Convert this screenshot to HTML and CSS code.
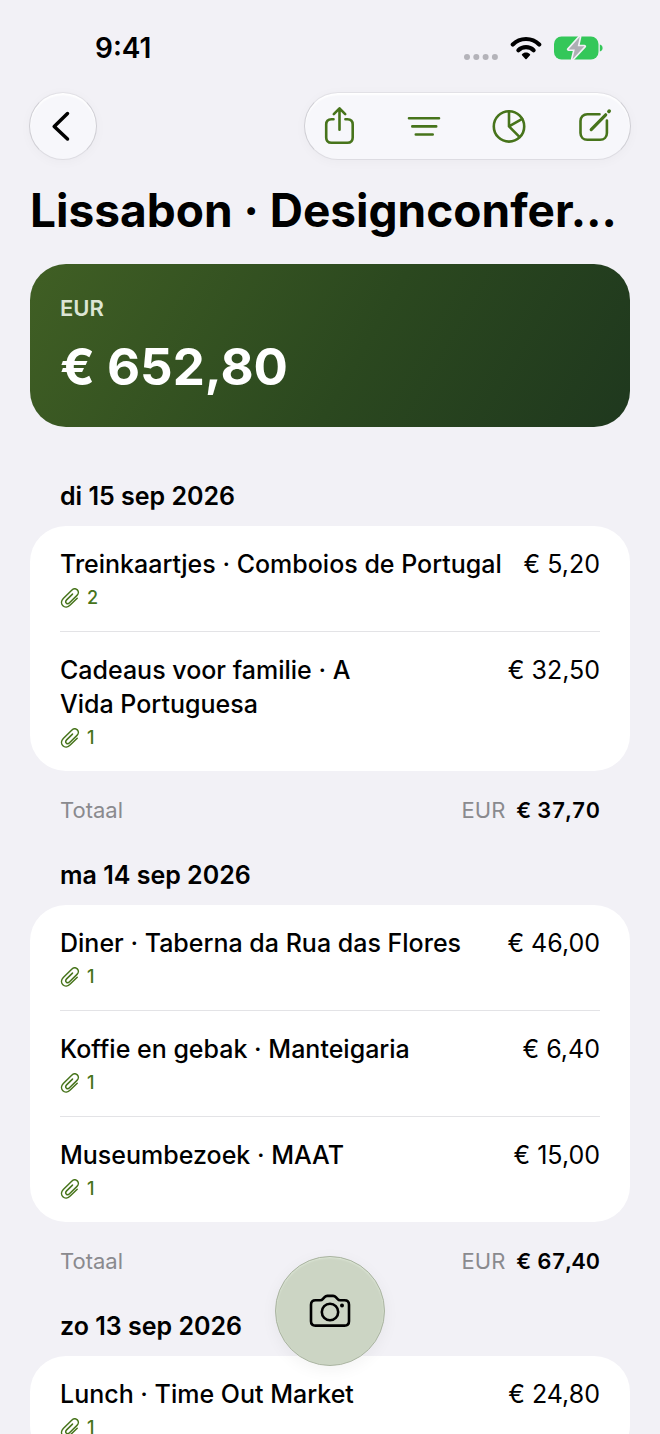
FILE: index.html
```html
<!DOCTYPE html>
<html lang="nl">
<head>
  <meta charset="UTF-8">
  <meta name="viewport" content="width=device-width, initial-scale=1">
  <title>Lissabon</title>
  <link rel="stylesheet" href="styles.css">
</head>
<body>

  <svg class="symbols" aria-hidden="true">
    <symbol id="paperclip" viewBox="0 0 20 20">
      <path d="M17.200 10.200 10.200 17C8 19.200 4.900 19.700 2.900 17.700 .9 15.700 1.200 12.700 3.300 10.500L11.700 2.300C13.400 .6 15.800 .5 17.300 1.900 18.800 3.400 18.700 5.700 17 7.400L9.500 14.800C8.500 15.800 7.200 15.900 6.300 15.100 5.500 14.200 5.600 12.900 6.600 11.900L12.500 6.100"/>
    </symbol>
  </svg>

  <div class="status-bar">
    <span class="time">9:41</span>
    <div class="status-icons">
      <svg width="34" height="24" viewBox="0 0 34 24" fill="#b4b3b9">
        <circle cx="3" cy="21" r="3"/>
        <circle cx="12.300" cy="21" r="3"/>
        <circle cx="21.600" cy="21" r="3"/>
        <circle cx="30.900" cy="21" r="3"/>
      </svg>
      <svg width="32" height="24" viewBox="0 0 32 24" fill="none" stroke="#000" stroke-width="4.200">
        <path d="M2.800 8.400C10 1.200 22 1.200 29.200 8.400" stroke-linecap="round"/>
        <path d="M8.400 14.200C12.600 10.100 19.400 10.100 23.600 14.200" stroke-linecap="round"/>
        <path d="M16 16.600c-1.600 0-3 .6-4 1.600-.3.300-.3.700 0 1L15.400 23c.4.400.8.400 1.200 0L20 19.200c.3-.3.3-.7 0-1-1-1-2.400-1.600-4-1.600z" fill="#000" stroke="none"/>
      </svg>
      <svg width="50" height="24" viewBox="0 0 50 24">
        <rect x="0" y="0.500" width="44.500" height="23" rx="7.500" fill="#34c759"/>
        <path d="M45.800 8.600c1.800.5 2.800 1.700 2.800 3.400s-1 2.900-2.800 3.400z" fill="#34c759"/>
        <path d="M25.800.8 14.500 13.400h6.300L18.500 23.200 30.500 10.300h-6.800z" fill="#aeaeb4" stroke="#f2f1f6" stroke-width="3.200" stroke-linejoin="round" paint-order="stroke"/>
      </svg>
    </div>
  </div>

  <header class="toolbar">
    <button class="glass back" aria-label="Terug">
      <svg width="24" height="32" viewBox="0 0 24 32" fill="none" stroke="#000" stroke-width="3.500" stroke-linecap="round" stroke-linejoin="round">
        <path d="M16.500 3.500 3.200 16.500 16.500 29"/>
      </svg>
    </button>
    <div class="glass actions">
      <button aria-label="Deel">
        <svg width="32" height="40" viewBox="0 0 32 40">
          <path d="M10.500 13.200H8.500C5.200 13.200 3.200 15.200 3.200 18.500v12.900c0 3.300 2 5.300 5.300 5.300h15.900c3.300 0 5.300-2 5.300-5.300V18.500c0-3.300-2-5.300-5.300-5.300h-2"/>
          <path d="M16.500 23.800V2.600M10.800 8.100l5.700-5.800 5.700 5.800"/>
        </svg>
      </button>
      <button aria-label="Sorteer">
        <svg width="34" height="40" viewBox="0 0 34 40">
          <path d="M2 12.200h30M5.300 20.400h23.900M8.800 28.500h16.900"/>
        </svg>
      </button>
      <button aria-label="Statistiek">
        <svg width="34" height="40" viewBox="0 0 34 40">
          <circle cx="17" cy="20.400" r="15.200"/>
          <path d="M17 5.200v15.200l10.700 10.800M17 20.400l13.200-7.600"/>
        </svg>
      </button>
      <button aria-label="Bewerk">
        <svg width="34" height="40" viewBox="0 0 34 40">
          <path d="M21.500 8.200H9.300C5.300 8.200 2.500 11 2.500 15v11.900c0 4 2.800 6.800 6.800 6.800h12.800c4 0 6.800-2.800 6.800-6.800V14.500"/>
          <path d="M13.200 23.600 27.700 8.800" stroke-width="3.200"/>
          <path d="M30.900 5.400l.3-.3" stroke-width="3.600"/>
        </svg>
      </button>
    </div>
  </header>

  <main>
    <h1>Lissabon · Designconfer…</h1>

    <section class="summary">
      <h2>EUR</h2>
      <p>€ 652,80</p>
    </section>

    <section class="day">
      <h2>di 15 sep 2026</h2>
      <ul>
        <li>
          <h3>Treinkaartjes · Comboios de Portugal</h3>
          <span class="price">€ 5,20</span>
          <span class="files"><svg><use href="#paperclip"/></svg>2</span>
        </li>
        <li>
          <h3>Cadeaus voor familie&nbsp;·&nbsp;A Vida Portuguesa</h3>
          <span class="price">€ 32,50</span>
          <span class="files"><svg><use href="#paperclip"/></svg>1</span>
        </li>
      </ul>
      <p class="total">Totaal <span>EUR</span> <strong>€ 37,70</strong></p>
    </section>

    <section class="day">
      <h2>ma 14 sep 2026</h2>
      <ul>
        <li>
          <h3>Diner · Taberna da Rua das Flores</h3>
          <span class="price">€ 46,00</span>
          <span class="files"><svg><use href="#paperclip"/></svg>1</span>
        </li>
        <li>
          <h3>Koffie en gebak · Manteigaria</h3>
          <span class="price">€ 6,40</span>
          <span class="files"><svg><use href="#paperclip"/></svg>1</span>
        </li>
        <li>
          <h3>Museumbezoek · MAAT</h3>
          <span class="price">€ 15,00</span>
          <span class="files"><svg><use href="#paperclip"/></svg>1</span>
        </li>
      </ul>
      <p class="total">Totaal <span>EUR</span> <strong>€ 67,40</strong></p>
    </section>

    <section class="day">
      <h2>zo 13 sep 2026</h2>
      <ul>
        <li>
          <h3>Lunch · Time Out Market</h3>
          <span class="price">€ 24,80</span>
          <span class="files"><svg><use href="#paperclip"/></svg>1</span>
        </li>
      </ul>
    </section>
  </main>

  <button class="camera" aria-label="Maak foto">
    <svg width="42" height="34" viewBox="0 0 42 34" fill="none" stroke="#000" stroke-width="2.600" stroke-linejoin="round">
      <path d="M6.500 6.300h4.800c1 0 1.700-.3 2.400-1.100l1.900-2.100c.8-.9 1.500-1.200 2.700-1.200h5.800c1.200 0 1.900.3 2.700 1.200l1.900 2.100c.7.800 1.400 1.100 2.400 1.100h4.400c2.900 0 4.500 1.500 4.500 4.400v16.500c0 2.900-1.600 4.400-4.500 4.400h-29c-2.900 0-4.500-1.500-4.500-4.400V10.700c0-2.900 1.600-4.400 4.500-4.400z"/>
      <circle cx="21" cy="18" r="8.200"/>
      <circle cx="33" cy="11.600" r="2" fill="#000" stroke="none"/>
    </svg>
  </button>

</body>
</html>
```
FILE: styles.css
```css
* {
  box-sizing: border-box;
}
body {
  height: 100vh;
  margin: 0;
  padding: 0 30px;
  overflow: hidden;
  background: #f2f1f6;
  color: #000;
  font-family: Inter, "Liberation Sans", sans-serif;
  font-size: 25px;
  line-height: 34px;
}
h1, h2, h3, p, ul {
  margin: 0;
  padding: 0;
}
button {
  padding: 0;
  border: none;
  background: none;
  cursor: pointer;
}
svg {
  display: block;
}
.symbols {
  display: none;
}

/* status bar */
.status-bar {
  display: flex;
  justify-content: space-between;
  align-items: center;
  height: 92px;
  padding: 4px 26px 0 65px;
}
.time {
  font-size: 28px;
  font-weight: 600;
}
.status-icons {
  display: flex;
  gap: 12px;
}

/* toolbar */
.toolbar {
  display: flex;
  justify-content: space-between;
  margin: 0 -1px;
}
.glass {
  display: flex;
  align-items: center;
  height: 68px;
  border: 1px solid #cfced4;
  border-top-color: #e2e1e6;
  border-bottom-color: #dddce2;
  border-radius: 34px;
  background: #f7f7fb;
  box-shadow: 0 2px 12px rgba(0, 0, 0, 0.03), inset 0 2px 2px #fff;
}
.back {
  justify-content: center;
  width: 68px;
}
.actions {
  justify-content: space-between;
  width: 327px;
  padding: 0 18px;
}
.actions svg {
  fill: none;
  stroke: #47741b;
  stroke-width: 2.6px;
  stroke-linecap: round;
  stroke-linejoin: round;
}

h1 {
  margin: 20px 0 24px;
  overflow: hidden;
  font-size: 46px;
  font-weight: 700;
  line-height: 60px;
  text-overflow: ellipsis;
  white-space: nowrap;
}

.summary {
  padding: 27px 30px 30px;
  border-radius: 36px;
  background: linear-gradient(120deg, #405f24, #2b481f 55%, #1f381e);
  color: #fff;
}
.summary h2 {
  color: #dce5d4;
  font-size: 22px;
  font-weight: 600;
}
.summary p {
  margin-top: 12px;
  font-size: 51px;
  font-weight: 700;
  line-height: 60px;
}

/* expenses per day */
.day {
  margin-top: 31px;
}
.summary + .day {
  margin-top: 52px;
}
.day h2 {
  margin: 0 30px 13px;
  font-size: 25px;
  font-weight: 600;
}
.day ul {
  padding: 0 30px;
  border-radius: 36px;
  background: #fff;
  list-style: none;
}
.day li {
  display: grid;
  grid-template-columns: 1fr auto;
  column-gap: 16px;
  padding: 21px 0 16px;
}
.day li + li {
  border-top: 1px solid #e3e3e6;
}
.day h3 {
  font-size: 25px;
  font-weight: 500;
  text-wrap: balance;
}
.files {
  display: flex;
  align-items: center;
  gap: 7px;
  color: #47741b;
  font-size: 18px;
  font-weight: 500;
}
.files svg {
  width: 20px;
  height: 20px;
  fill: none;
  stroke: currentColor;
  stroke-width: 1.5px;
  stroke-linecap: round;
}
.total {
  display: flex;
  gap: 11px;
  margin: 22px 30px 0;
  color: #8a8a8e;
  font-size: 22px;
  font-variant-numeric: tabular-nums;
}
.total span {
  margin-left: auto;
}
.total strong {
  color: #000;
  font-weight: 600;
}

.camera {
  position: fixed;
  bottom: 68px;
  left: calc(50% - 55px);
  display: flex;
  justify-content: center;
  align-items: center;
  width: 110px;
  height: 110px;
  border: 1px solid #a9b3a0;
  border-radius: 50%;
  background: #ccd5c4;
  box-shadow: 0 4px 16px rgba(0, 0, 0, 0.05), inset 0 1px 2px #e0eada;
}
```
